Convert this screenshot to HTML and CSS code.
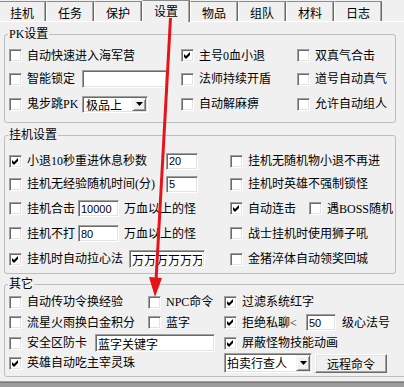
FILE: index.html
```html
<!DOCTYPE html>
<html>
<head>
<meta charset="utf-8">
<link rel="stylesheet" href="styles.css">
</head>
<body>
<div class="tabs">
  <div class="tab">挂机</div>
  <div class="tab">任务</div>
  <div class="tab">保护</div>
  <div class="tab active">设置</div>
  <div class="tab">物品</div>
  <div class="tab">组队</div>
  <div class="tab">材料</div>
  <div class="tab">日志</div>
</div>
<div class="page">
  <fieldset class="group g-pk">
    <legend>PK设置</legend>
    <div class="grid pk-grid">
      <div class="item"><span class="cb"></span>自动快速进入海军营</div>
      <div class="item"><span class="cb"><svg viewBox="0 0 9 9" width="9" height="9"><polygon points="1,3 3,5 7,1 7,4 3,8 1,6"/></svg></span>主号0血小退</div>
      <div class="item"><span class="cb"></span>双真气合击</div>
      <div class="item"><span class="cb"></span><span class="lbl w55">智能锁定</span><input class="txt w85" value=""></div>
      <div class="item"><span class="cb"></span>法师持续开盾</div>
      <div class="item"><span class="cb"></span>道号自动真气</div>
      <div class="item"><span class="cb"></span><span class="lbl w55">鬼步跳PK</span><div class="combo c-small"><span class="val">极品上</span><span class="drop"><svg viewBox="0 0 7 4" width="7" height="4"><polygon points="0,0 7,0 3.5,4"/></svg></span></div></div>
      <div class="item"><span class="cb"></span>自动解麻痹</div>
      <div class="item"><span class="cb"></span>允许自动组人</div>
    </div>
  </fieldset>

  <fieldset class="group g-hang">
    <legend>挂机设置</legend>
    <div class="grid hang-grid">
      <div class="item"><span class="cb"><svg viewBox="0 0 9 9" width="9" height="9"><polygon points="1,3 3,5 7,1 7,4 3,8 1,6"/></svg></span><span class="lbl w139">小退10秒重进休息秒数</span><input class="txt num w32" value="20"></div>
      <div class="item"><span class="cb"></span>挂机无随机物小退不再进</div>
      <div class="item"><span class="cb"></span><span class="lbl w139">挂机无经验随机时间(分)</span><input class="txt num w32" value="5"></div>
      <div class="item"><span class="cb"></span>挂机时英雄不强制锁怪</div>
      <div class="item"><span class="cb"></span><span class="lbl w51">挂机合击</span><input class="txt num w41" value="10000"><span class="after">万血以上的怪</span></div>
      <div class="item"><span class="cb"><svg viewBox="0 0 9 9" width="9" height="9"><polygon points="1,3 3,5 7,1 7,4 3,8 1,6"/></svg></span>自动连击<span class="cb gap13"></span>遇BOSS随机</div>
      <div class="item"><span class="cb"></span><span class="lbl w51">挂机不打</span><input class="txt num w41" value="80"><span class="after">万血以上的怪</span></div>
      <div class="item"><span class="cb"></span>战士挂机时使用狮子吼</div>
      <div class="item"><span class="cb"><svg viewBox="0 0 9 9" width="9" height="9"><polygon points="1,3 3,5 7,1 7,4 3,8 1,6"/></svg></span><span class="lbl w102">挂机时自动拉心法</span><input class="txt w75 tall" value="万万万万万万"></div>
      <div class="item"><span class="cb"></span>金猪淬体自动领奖回城</div>
    </div>
  </fieldset>

  <fieldset class="group g-misc">
    <legend>其它</legend>
    <div class="grid misc-grid">
      <div class="item"><span class="cb"></span>自动传功令换经验</div>
      <div class="item"><span class="cb"></span>NPC命令</div>
      <div class="item"><span class="cb"><svg viewBox="0 0 9 9" width="9" height="9"><polygon points="1,3 3,5 7,1 7,4 3,8 1,6"/></svg></span>过滤系统红字</div>

      <div class="item"><span class="cb"></span>流星火雨换白金积分</div>
      <div class="item"><span class="cb"></span>蓝字</div>
      <div class="item"><span class="cb"><svg viewBox="0 0 9 9" width="9" height="9"><polygon points="1,3 3,5 7,1 7,4 3,8 1,6"/></svg></span><span class="lbl w64">拒绝私聊&lt;</span><input class="txt num w30" value="50"><span class="after2">级心法号</span></div>

      <div class="item span2"><span class="cb"></span><span class="lbl w68">安全区防卡</span><input class="txt w120 tall" value="蓝字关键字"></div>
      <div class="item"><span class="cb"><svg viewBox="0 0 9 9" width="9" height="9"><polygon points="1,3 3,5 7,1 7,4 3,8 1,6"/></svg></span>屏蔽怪物技能动画</div>

      <div class="item span2"><span class="cb"><svg viewBox="0 0 9 9" width="9" height="9"><polygon points="1,3 3,5 7,1 7,4 3,8 1,6"/></svg></span>英雄自动吃主宰灵珠</div>
      <div class="item"><div class="combo c-big"><span class="val">拍卖行查人</span><span class="drop"><svg viewBox="0 0 7 4" width="7" height="4"><polygon points="0,0 7,0 3.5,4"/></svg></span></div><button class="btn">远程命令</button></div>
    </div>
  </fieldset>
</div>
<div class="base"></div>

<svg class="arrow" width="404" height="387" viewBox="0 0 404 387">
  <line x1="170.5" y1="18" x2="156" y2="281" stroke="#e5141b" stroke-width="3"/>
  <polygon points="149,277 162,278 155,297" fill="#e5141b"/>
</svg>
</body>
</html>
```

FILE: styles.css
```css
* { box-sizing: border-box; }
html, body { margin: 0; padding: 0; }
body {
  width: 404px;
  height: 387px;
  overflow: hidden;
  position: relative;
  background: #f0f0f0;
  color: #000;
  font: 12px/14px "Liberation Serif", "Noto Sans CJK SC", serif;
}

/* tabs */
.tabs { display: flex; height: 21px; margin-left: -2px; }
.tab {
  width: 48px;
  height: 20px;
  margin-top: 1px;
  padding-top: 2px;
  border-top: 1px solid #8c8c8c;
  border-left: 1px solid #fff;
  border-right: 1px solid #6a6a6a;
  box-shadow: inset -1px 0 0 #a8a8a8;
  text-align: center;
  line-height: 17px;
  font-family: "Noto Sans CJK SC", sans-serif;
}
.tab.active {
  height: 22px;
  margin-top: 0;
  padding-top: 0;
  line-height: 20px;
  position: relative;
  z-index: 1;
  background: #f0f0f0;
}

/* page */
.page {
  height: 361px;
  border-top: 1px solid #fff;
  border-bottom: 1px solid #a0a0a0;
  padding-top: 5px;
}
.base { height: 5px; background: #9c9c9c; border-top: 1px solid #7a7a7a; }

/* group boxes */
.group {
  margin: 0 0 0 4px;
  width: 392px;
  min-width: 0;
  border: 1px solid #bdbdbd;
  border-radius: 3px;
  padding: 3px 0 5px 4px;
}
.group legend { padding: 0 1px; margin-left: -1px; line-height: 14px; height: 14px; }
.g-hang { margin-top: 5px; padding-top: 8px; padding-bottom: 1px; }
.g-misc { margin-top: 3px; width: 420px; padding-top: 1px; padding-bottom: 3px; }

.grid { display: grid; align-items: center; }
.pk-grid { grid-template-columns: 172px 116px 1fr; grid-template-rows: 23px 24px 26px; }
.hang-grid { grid-template-columns: 221px 1fr; grid-template-rows: 22px 24px 25px 25px 26px; }
.misc-grid { grid-template-columns: 139px 76px 1fr; grid-template-rows: 20px 21px 20px 20px; }
.span2 { grid-column: span 2; }

.item { display: flex; align-items: center; white-space: nowrap; }

/* checkbox */
.cb {
  flex: none;
  width: 13px;
  height: 13px;
  margin-right: 5px;
  background: #fff;
  border: 1px solid;
  border-color: #a0a0a0 #fff #fff #a0a0a0;
  box-shadow: inset 1px 1px 0 #6a6a6a, inset -1px -1px 0 #e3e3e3;
}
.cb svg { display: block; margin: 1px; fill: #000; }
.gap13 { margin-left: 13px; }

.lbl { flex: none; }
.w55 { width: 55px; }
.w139 { width: 139px; }
.w51 { width: 51px; }
.w102 { width: 102px; }
.w64 { width: 64px; }
.w68 { width: 68px; }

/* text inputs */
.txt {
  flex: none;
  height: 17px;
  margin: 0;
  padding: 0 2px;
  background: #fff;
  border: 1px solid;
  border-color: #a0a0a0 #fff #fff #a0a0a0;
  box-shadow: inset 1px 1px 0 #6a6a6a, inset -1px -1px 0 #e3e3e3;
  font: 12px/14px "Noto Sans CJK SC", sans-serif;
  color: #000;
  outline: none;
  overflow: hidden;
}
.txt.num { font: 11px/14px "Liberation Sans", sans-serif; }
.txt.tall { height: 18px; }
.w85 { width: 85px; height: 18px; }
.w32 { width: 32px; }
.w41 { width: 41px; }
.w75 { width: 76px; }
.w120 { width: 120px; }
.w30 { width: 30px; }
.after { margin-left: 5px; }
.after2 { margin-left: 6px; }

/* combos */
.combo {
  flex: none;
  display: flex;
  padding: 1px;
  background: #fff;
  border: 1px solid;
  border-color: #a0a0a0 #fff #fff #a0a0a0;
  box-shadow: inset 1px 1px 0 #6a6a6a, inset -1px -1px 0 #e3e3e3;
  font-family: "Noto Sans CJK SC", sans-serif;
}
.c-small { width: 66px; height: 17px; }
.c-big { width: 88px; height: 20px; }
.combo .val { flex: 1; line-height: 13px; padding-left: 2px; white-space: nowrap; }
.c-big .val { line-height: 16px; padding-left: 1px; }
.drop {
  flex: none;
  width: 14px;
  display: flex;
  align-items: center;
  justify-content: center;
  background: #f0f0f0;
  border: 1px solid;
  border-color: #f0f0f0 #6a6a6a #6a6a6a #f0f0f0;
  box-shadow: inset 1px 1px 0 #fff, inset -1px -1px 0 #a0a0a0;
}
.drop svg { display: block; fill: #000; }

/* button */
.btn {
  flex: none;
  width: 72px;
  height: 19px;
  margin: 0 0 0 3px;
  padding: 0;
  background: #f0f0f0;
  border: 1px solid;
  border-color: #fff #6a6a6a #6a6a6a #fff;
  box-shadow: inset -1px -1px 0 #a0a0a0, inset 1px 1px 0 #e3e3e3;
  font: 12px/15px "Noto Sans CJK SC", sans-serif;
  color: #000;
}

/* annotation arrow drawn over the form */
.arrow { position: absolute; left: 0; top: 0; pointer-events: none; z-index: 5; }
```
